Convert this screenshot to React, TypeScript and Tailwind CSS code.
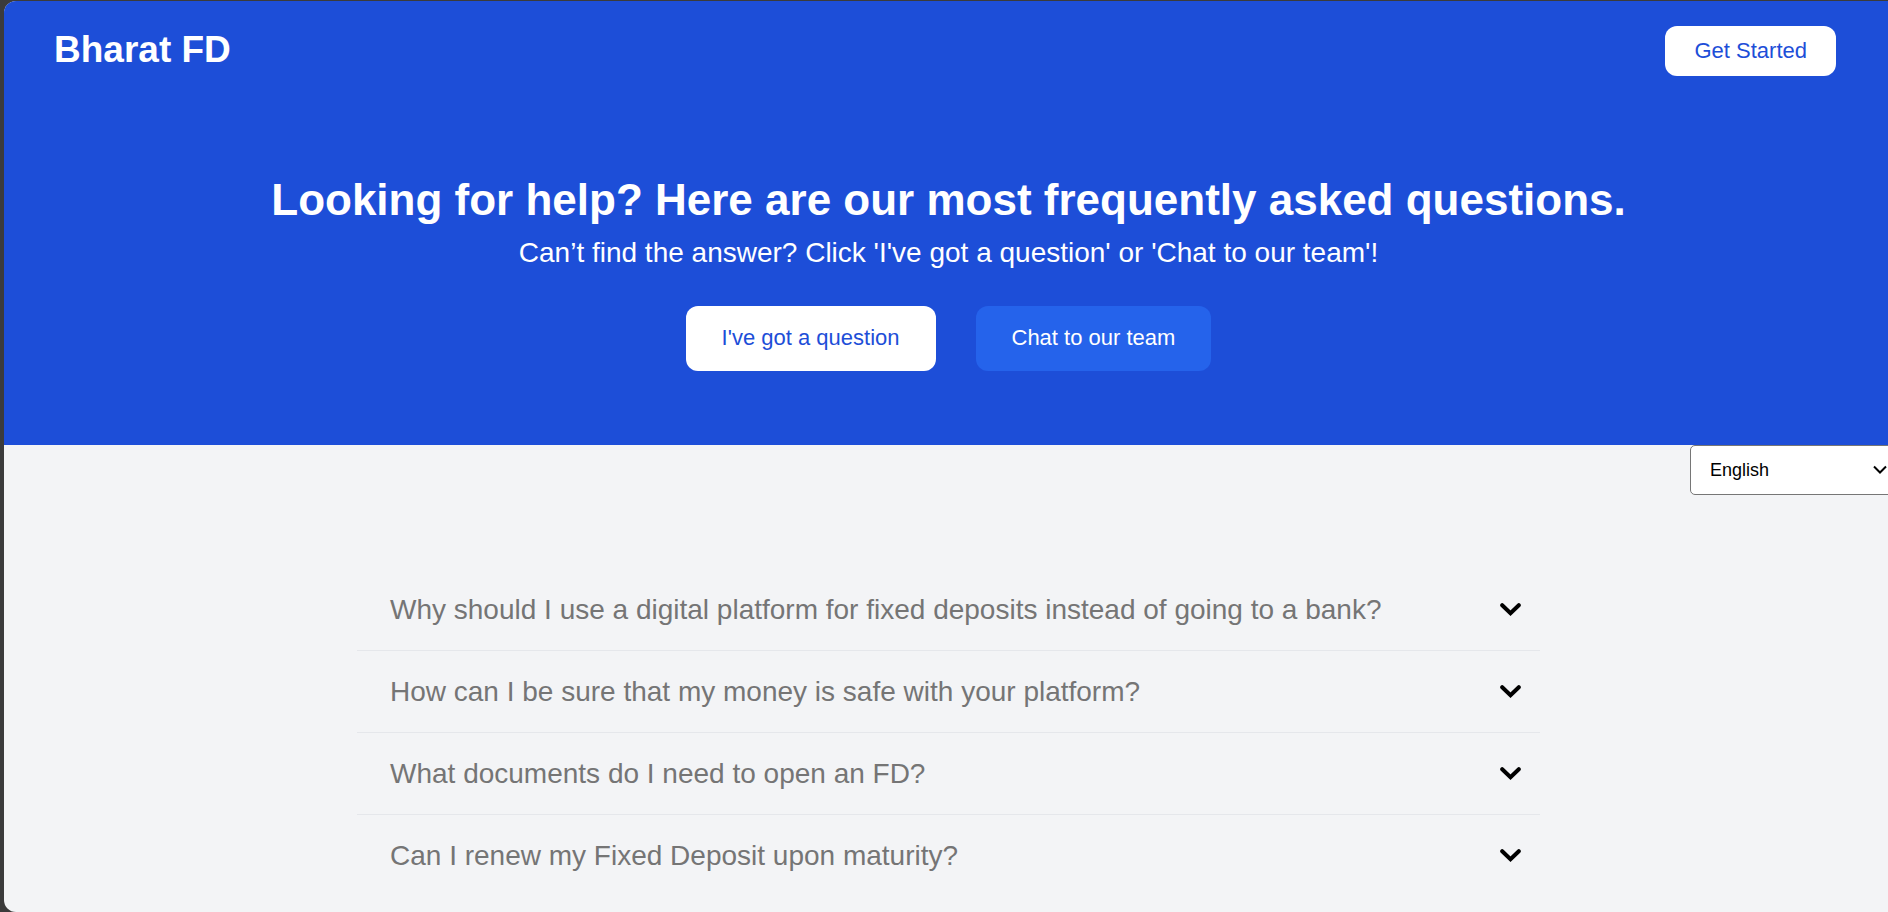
const questions = [
  "Why should I use a digital platform for fixed deposits instead of going to a bank?",
  "How can I be sure that my money is safe with your platform?",
  "What documents do I need to open an FD?",
  "Can I renew my Fixed Deposit upon maturity?",
];

function Hero() {
  return (
    <div className="bg-[#1d4ed8] pb-[74px] text-white">
      <header className="flex items-start justify-between pt-[25px] pr-[57px] pl-[50px]">
        <span className="text-[37px] leading-[48px] font-bold">Bharat FD</span>
        <button type="button" className="h-[50px] rounded-xl bg-white px-[29px] pb-[2px] text-[22px] text-[#1d4ed8]">
          Get Started
        </button>
      </header>
      <section className="mt-[96px] flex flex-col items-center text-center">
        <h1 className="text-[44px] leading-[56px] font-bold">
          Looking for help? Here are our most frequently asked questions.
        </h1>
        <p className="mt-[6px] text-[28px] leading-[38px]">
          Can’t find the answer? Click 'I've got a question' or 'Chat to our team'!
        </p>
        <div className="mt-[34px] flex gap-10">
          <button type="button" className="h-[65px] rounded-xl bg-white px-9 pb-[2px] text-[22px] text-[#1d4ed8]">
            I've got a question
          </button>
          <button type="button" className="h-[65px] rounded-xl bg-[#2563eb] px-9 pb-[2px] text-[22px] text-white">
            Chat to our team
          </button>
        </div>
      </section>
    </div>
  );
}

function LanguageSelect() {
  return (
    <div className="flex justify-end">
      <div className="relative w-[203px]">
        <select
          aria-label="Language"
          defaultValue="English"
          className="h-[50px] w-full appearance-none rounded-[5px] border border-[#767676] bg-white pl-[19px] text-[18px] text-black"
        >
          <option>English</option>
          <option>Hindi</option>
          <option>Bengali</option>
        </select>
        <svg
          viewBox="0 0 14 10"
          aria-hidden="true"
          className="pointer-events-none absolute top-5 right-1.5 h-[10px] w-[14px] fill-none stroke-black stroke-2"
        >
          <path d="M1 1.5 L7 7.5 L13 1.5" />
        </svg>
      </div>
    </div>
  );
}

function ChevronDown() {
  return (
    <svg
      viewBox="0 0 21 13"
      aria-hidden="true"
      className="h-[13px] w-[21px] shrink-0 fill-none stroke-black stroke-4"
      strokeLinecap="round"
    >
      <path d="M2.2 2.2 L10.5 10.2 L18.8 2.2" />
    </svg>
  );
}

function Faq() {
  return (
    <main className="mx-auto mt-[74px] w-full max-w-[1183px]">
      <ul className="divide-y divide-[#e5e7eb]">
        {questions.map((question) => (
          <li key={question}>
            <button
              type="button"
              className="flex h-[81px] w-full items-center justify-between pr-[19px] pl-[33px] text-left text-[28px] text-[#757575]"
            >
              {question}
              <ChevronDown />
            </button>
          </li>
        ))}
      </ul>
    </main>
  );
}

export default function App() {
  return (
    <div className="min-h-screen overflow-hidden bg-[#3b3b3b] pt-px pl-1 font-['Liberation_Sans',Arial,sans-serif]">
      <div className="-mr-[5px] min-h-[calc(100vh-1px)] overflow-hidden rounded-l-xl bg-[#f3f4f6]">
        <Hero />
        <LanguageSelect />
        <Faq />
      </div>
    </div>
  );
}
